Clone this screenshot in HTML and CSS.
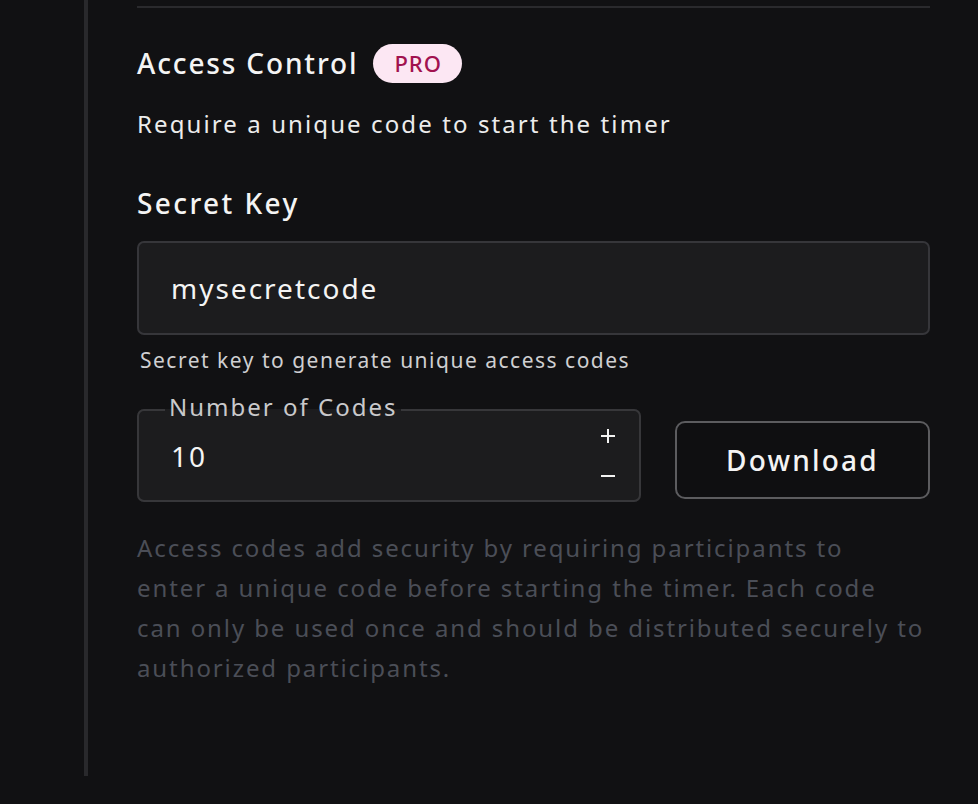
FILE: index.html
```html
<!DOCTYPE html>
<html lang="en">
<head>
<meta charset="utf-8">
<title>Access Control</title>
<link rel="stylesheet" href="styles.css">
</head>
<body>
<div class="panel">
  <hr class="divider">
  <div class="title-row">
    <h2 class="title">Access Control</h2>
    <span class="badge">PRO</span>
  </div>
  <p class="desc">Require a unique code to start the timer</p>

  <label class="label" for="secret">Secret Key</label>
  <div class="input-box">
    <input id="secret" class="input" type="text" value="mysecretcode">
  </div>
  <p class="helper">Secret key to generate unique access codes</p>

  <div class="codes-row">
    <fieldset class="num-field">
      <legend class="legend">Number of Codes</legend>
      <div class="num-inner">
        <span class="num-value">10</span>
        <div class="stepper">
          <button class="step" type="button" aria-label="Increase">
            <svg width="16" height="16" viewBox="0 0 16 16"><path d="M8 1v14M1 8h14" stroke="#f2f2f2" stroke-width="2" fill="none"/></svg>
          </button>
          <button class="step" type="button" aria-label="Decrease">
            <svg width="16" height="16" viewBox="0 0 16 16"><path d="M1 8h14" stroke="#f2f2f2" stroke-width="2" fill="none"/></svg>
          </button>
        </div>
      </div>
    </fieldset>
    <button class="download" type="button">Download</button>
  </div>

  <p class="note">Access codes add security by requiring participants to<br>enter a unique code before starting the timer. Each code can only be used once and should be distributed securely to authorized participants.</p>
</div>
</body>
</html>
```
FILE: styles.css
```css
html, body {
  margin: 0;
  padding: 0;
  background: #111113;
}
body {
  font-family: "Noto Sans", "DejaVu Sans", sans-serif;
  color: #f2f2f2;
  width: 978px;
  height: 804px;
  overflow: hidden;
}
.panel {
  margin-left: 84px;
  border-left: 4px solid #29292c;
  height: 776px;
  box-sizing: border-box;
  padding: 6px 48px 0 49px;
  display: flex;
  flex-direction: column;
}
.divider {
  margin: 0;
  border: 0;
  height: 2px;
  background: #2a2a2d;
}
.title-row {
  display: flex;
  align-items: center;
  gap: 15px;
  height: 39px;
  margin-top: 36px;
}
.title {
  margin: 0;
  font-size: 28px;
  font-weight: 500;
  letter-spacing: 1.85px;
  line-height: 39px;
  color: #f4f4f4;
}
.badge {
  height: 39px;
  line-height: 39px;
  padding: 0 20px 0 21px;
  border-radius: 20px;
  background: #fce7f3;
  color: #a1124f;
  font-size: 22px;
  font-weight: 500;
  letter-spacing: 1px;
}
.desc {
  margin: 25px 0 0;
  font-size: 24px;
  line-height: 32px;
  letter-spacing: 2.1px;
  color: #ececec;
}
.label {
  display: block;
  margin-top: 45px;
  font-size: 28px;
  line-height: 36px;
  font-weight: 500;
  letter-spacing: 2.4px;
  color: #f4f4f4;
}
.input-box {
  margin-top: 20px;
  height: 94px;
  box-sizing: border-box;
  border: 2px solid #36363a;
  border-radius: 7px;
  background: #1c1c1e;
  display: flex;
}
.input {
  flex: 1;
  border: 0;
  outline: 0;
  background: transparent;
  padding: 0 0 0 32px;
  font-family: inherit;
  font-size: 28px;
  letter-spacing: 2px;
  line-height: 90px;
  height: 90px;
  color: #f4f4f4;
}
.helper {
  margin: 11px 0 0;
  padding-left: 3px;
  font-size: 21px;
  line-height: 28px;
  letter-spacing: 1.5px;
  color: #cfcfd1;
}
.codes-row {
  margin-top: 18px;
  display: flex;
  align-items: flex-start;
  gap: 34px;
}
.num-field {
  margin: 0;
  width: 504px;
  box-sizing: border-box;
  border: 2px solid #37373a;
  border-radius: 7px;
  background: #1c1c1e;
  padding: 0 0 0 26px;
  min-width: 0;
}
.legend {
  padding: 0 4px 5px;
  font-size: 24px;
  line-height: 30px;
  letter-spacing: 2px;
  color: #c9c9cb;
}
.num-inner {
  display: flex;
  align-items: flex-start;
  height: 73px;
}
.num-value {
  flex: 1;
  margin: 11px 0 0 6px;
  font-size: 28px;
  line-height: 36px;
  letter-spacing: 2px;
  color: #f4f4f4;
}
.stepper {
  display: flex;
  flex-direction: column;
  gap: 14px;
  margin: -4px 11px 0 0;
  width: 40px;
}
.step {
  height: 26px;
  padding: 0;
  border: 0;
  background: transparent;
  display: flex;
  align-items: center;
  justify-content: center;
}
.download {
  margin-top: 29px;
  width: 255px;
  height: 78px;
  box-sizing: border-box;
  border: 2px solid #5c5c5f;
  border-radius: 10px;
  background: #0f0f11;
  color: #f4f4f4;
  font-family: inherit;
  font-size: 28px;
  font-weight: 500;
  letter-spacing: 2.2px;
  padding: 0;
}
.note {
  margin: 26px 0 0;
  font-size: 24px;
  line-height: 40px;
  letter-spacing: 1.9px;
  color: #4b4e57;
}
```
